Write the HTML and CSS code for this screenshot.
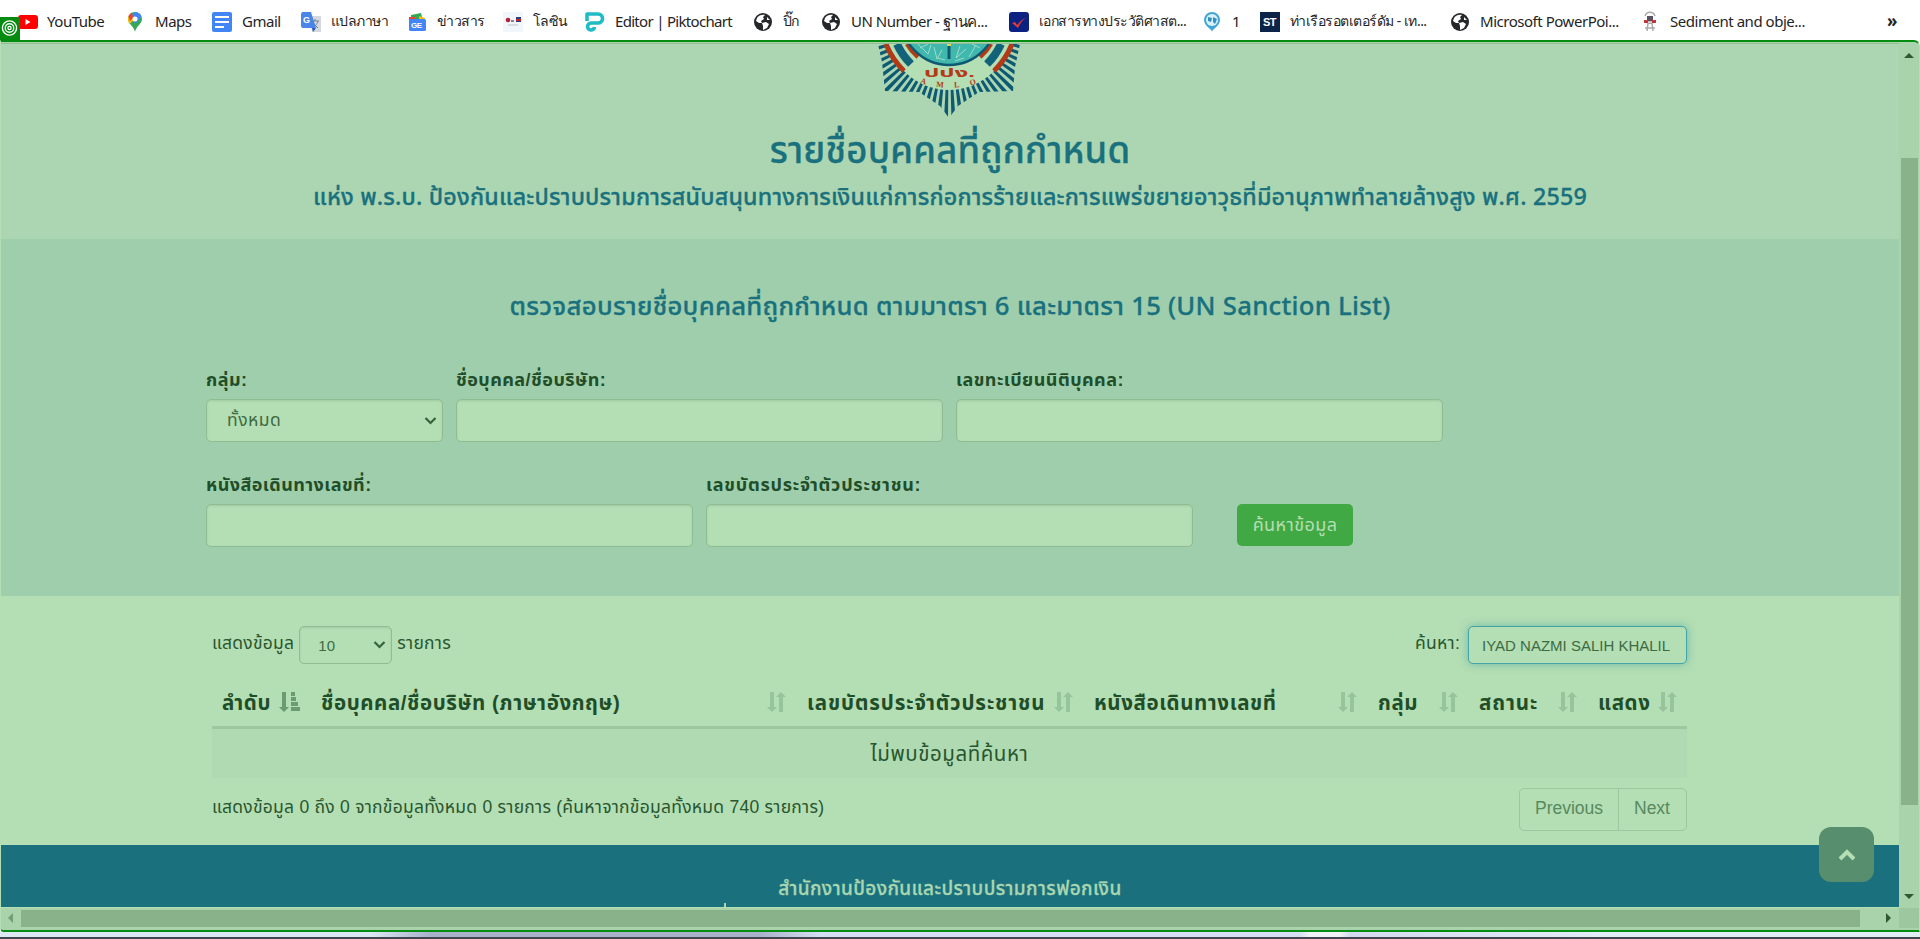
FILE: index.html
```html
<!DOCTYPE html>
<html lang="th">
<head>
<meta charset="utf-8">
<title>รายชื่อบุคคลที่ถูกกำหนด</title>
<link rel="stylesheet" href="styles.css">
</head>
<body>
<svg width="0" height="0" class="defs">
  <symbol id="globe" viewBox="0 0 20 20"><circle cx="10" cy="10" r="9" fill="#25272b"/><path d="M4 6c2-3 5-3.500 8-3l-2 2 1 2-3 2 1 2H6l-3-2zM9 11l4-1 3 2-2 4-4 2v-4zM14 5l3 3-3 0z" fill="#fff"/></symbol>
  <symbol id="sort" viewBox="0 0 19 20"><path d="M3 0h4v15h3l-5 5-5-5h3zM12 20h4V5h3l-5-5-5 5h3z"/></symbol>
  <symbol id="sorted" viewBox="0 0 21 20"><path d="M3 0h4v15h3l-5 5-5-5h3zM12 0h4v4h-4zM12 5h5v4h-5zM12 10h7v4h-7zM12 15h9v4h-9z"/></symbol>
  <symbol id="chev" viewBox="0 0 12 8"><path d="M1 1l5 5 5-5" fill="none" stroke="#35633a" stroke-width="2.200"/></symbol>
</svg>
<div class="screen">
  <nav class="bookmarks">
    <a class="bm"><svg viewBox="0 0 20 20"><rect x="1" y="3" width="20" height="14" rx="3" fill="#f00"/><path d="M8.500 7v6l5-3z" fill="#fff"/></svg><span>YouTube</span></a>
    <a class="bm"><svg viewBox="0 0 20 20"><path d="M10 0a7 7 0 0 0-7 7c0 5 6 7 7 13 1-6 7-8 7-13a7 7 0 0 0-7-7z" fill="#34a853"/><path d="M10 0a7 7 0 0 1 6.500 4.500L10 12 6 4z" fill="#4285f4"/><path d="M5 2l5 5-5.500 5A9 9 0 0 1 3 7a7 7 0 0 1 2-5z" fill="#fbbc04"/><path d="M5 2a7 7 0 0 1 2-1.500L8 6 5 9 3.500 4z" fill="#ea4335"/><circle cx="10" cy="7" r="2.500" fill="#fff"/></svg><span>Maps</span></a>
    <a class="bm"><svg viewBox="0 0 20 20"><rect width="20" height="20" rx="2" fill="#4285f4"/><path d="M3 5h14M3 10h14M3 15h9" stroke="#fff" stroke-width="2"/></svg><span>Gmail</span></a>
    <a class="bm thai"><svg viewBox="0 0 20 20"><path d="M8 4h12v16H11z" fill="#d5d8dc"/><path d="M11 9h7M14 7v2M17 9c-1 4-3 5-5 6M12 11l5 5" stroke="#6d8397" fill="none"/><path d="M1 0h9l5 16H2a2 2 0 0 1-2-2V2z" fill="#4a86e8"/><path d="M11 16h4l-3 4z" fill="#2458c4"/><text x="2" y="11" font-size="9" font-weight="700" fill="#fff">G</text></svg><span>แปลภาษา</span></a>
    <a class="bm thai"><svg viewBox="0 0 20 20"><path d="M4 3l10-2 2 8H4z" fill="#34a853"/><path d="M2 5h6v5H2z" fill="#ea4335"/><path d="M12 4l6 2-2 5h-4z" fill="#fbbc04"/><rect x="2" y="7" width="17" height="12" rx="1.500" fill="#4285f4"/><text x="4" y="16" font-size="8" font-weight="700" fill="#fff">GE</text></svg><span>ข่าวสาร</span></a>
    <a class="bm thai"><svg viewBox="0 0 20 20"><rect width="20" height="20" fill="#f1f6fb"/><circle cx="5" cy="8" r="2.300" fill="#b5203a"/><rect x="8" y="8" width="3" height="2" fill="#7d86a8"/><path d="M13 5h5v5h-5z" fill="#28418e"/><path d="M13 7h5v2h-5z" fill="#c22"/><path d="M5 13h10" stroke="#b9c2cf"/></svg><span>โลซิน</span></a>
    <a class="bm tight"><svg viewBox="0 0 20 20"><path d="M2 9V2h11a4.500 4.500 0 0 1 0 9H6a3.500 3.500 0 1 0 3.500 4" fill="none" stroke="#1fbcc6" stroke-width="3.600" stroke-linejoin="round"/></svg><span>Editor | Piktochart</span></a>
    <a class="bm thai"><svg><use href="#globe"/></svg><span>ปิ๊ก</span></a>
    <a class="bm"><svg><use href="#globe"/></svg><span>UN Number - ฐานค...</span></a>
    <a class="bm thai"><svg viewBox="0 0 20 20"><rect width="20" height="20" rx="3" fill="#0b2282"/><path d="M3 11l3-1 2 3c3-3 5-6 9-7-4 2-6 6-8 10z" fill="#e03c35"/></svg><span>เอกสารทางประวัติศาสต...</span></a>
    <a class="bm"><svg viewBox="0 0 20 20"><path d="M10 20c0-3-8-6-8-12a8 8 0 0 1 16 0c0 6-8 9-8 12z" fill="#42a5d3"/><circle cx="10" cy="8" r="6" fill="#d9f1fa"/><path d="M6 5l4 1-1 4-3-1zM11 5l4 2-2 5-2-2z" fill="#3290bf"/></svg><span>1</span></a>
    <a class="bm thai"><svg viewBox="0 0 20 20"><rect width="20" height="20" fill="#0d2449"/><text x="3" y="14" font-size="11" font-weight="700" fill="#fff">ST</text></svg><span>ท่าเรือรอตเตอร์ดัม - เท...</span></a>
    <a class="bm"><svg><use href="#globe"/></svg><span>Microsoft PowerPoi...</span></a>
    <a class="bm"><svg viewBox="0 0 20 20"><path d="M5 4c2-5 8-5 10 0M4 9l12 0M6 9c0 3 8 3 8 0M8 11l-1 8M12 11l1 8M5 16h10" stroke="#aaa" fill="none" stroke-width="1.500"/><rect x="7" y="4" width="6" height="5" fill="#5a5060"/><path d="M4 8h4v3H4zM12 8h4v3h-4z" fill="#c8343c"/></svg><span>Sediment and obje...</span></a>
    <span class="more">»</span>
  </nav>
  <div class="window">
    <div class="page">
      <header class="hero">
        <svg class="emblem" viewBox="136 4 148 75">
          <clipPath id="star"><path d="M138 4l4 18 3 29 34 1 21 14 9 12 9-12 21-14 34-1 2-24 5-23z"/></clipPath>
          <g clip-path="url(#star)"><circle cx="209" cy="-13" r="83" fill="none" stroke="#0e5a72" stroke-width="60" stroke-dasharray="3.700 3.200"/></g>
          <circle cx="209" cy="-13" r="63" fill="#b4deb4"/>
          <path d="M146 4q6 15 18 27M272 4q-6 15-18 27" stroke="#b23a17" stroke-width="5" fill="none"/>
          <path d="M157 4q5 11 14 20M261 4q-5 11-14 20" stroke="#12637a" stroke-width="8" fill="none"/>
          <path d="M167 4q4 7 11 13M251 4q-4 7-11 13" stroke="#b23a17" stroke-width="4.500" fill="none"/>
          <circle cx="209" cy="-23" r="48" fill="#40b8ad" stroke="#0e5a72" stroke-width="2.500"/>
          <path d="M180 8l8-4M178 4l10 10 3-9M194 7l3 12 5-9M220 6l-4 12 10-9M236 5l-7 12M240 8l-8-4M205 20l-8-2M215 21l9-3" stroke="#9cdccb" fill="none"/>
          <path d="M209 4v15" stroke="#0e5a72" stroke-width="3"/><path d="M207 4h4v2h-4z" fill="#e0d94a"/>
          <text x="184" y="36.500" class="em-th" textLength="51" lengthAdjust="spacingAndGlyphs">ปปง.</text>
          <path id="arc" d="M180 43q29 9 60 0" fill="none"/>
          <text class="em-en"><textPath href="#arc" textLength="57">AMLO</textPath></text>
        </svg>
        <h1>รายชื่อบุคคลที่ถูกกำหนด</h1>
        <h2>แห่ง พ.ร.บ. ป้องกันและปราบปรามการสนับสนุนทางการเงินแก่การก่อการร้ายและการแพร่ขยายอาวุธที่มีอานุภาพทำลายล้างสูง พ.ศ. 2559</h2>
      </header>
      <section class="search">
        <h3>ตรวจสอบรายชื่อบุคคลที่ถูกกำหนด ตามมาตรา 6 และมาตรา 15 (UN Sanction List)</h3>
        <div class="row">
          <label class="field small"><b>กลุ่ม:</b><i class="box select"><span>ทั้งหมด</span><svg class="chev"><use href="#chev"/></svg></i></label>
          <label class="field"><b>ชื่อบุคคล/ชื่อบริษัท:</b><i class="box"></i></label>
          <label class="field"><b>เลขทะเบียนนิติบุคคล:</b><i class="box"></i></label>
        </div>
        <div class="row">
          <label class="field"><b>หนังสือเดินทางเลขที่:</b><i class="box"></i></label>
          <label class="field"><b class="wide">เลขบัตรประจำตัวประชาชน:</b><i class="box"></i></label>
          <button class="go">ค้นหาข้อมูล</button>
        </div>
      </section>
      <section class="results">
        <div class="tools">
          <div class="len"><span>แสดงข้อมูล</span><i class="box select mini"><span>10</span><svg class="chev"><use href="#chev"/></svg></i><span>รายการ</span></div>
          <div class="find"><span>ค้นหา:</span><i class="box focus"><span>IYAD NAZMI SALIH KHALIL</span></i></div>
        </div>
        <div class="thead">
          <div class="th"><span>ลำดับ</span><svg class="on"><use href="#sorted"/></svg></div>
          <div class="th"><span>ชื่อบุคคล/ชื่อบริษัท (ภาษาอังกฤษ)</span><svg><use href="#sort"/></svg></div>
          <div class="th wide"><span>เลขบัตรประจำตัวประชาชน</span><svg><use href="#sort"/></svg></div>
          <div class="th"><span>หนังสือเดินทางเลขที่</span><svg><use href="#sort"/></svg></div>
          <div class="th"><span>กลุ่ม</span><svg><use href="#sort"/></svg></div>
          <div class="th wide"><span>สถานะ</span><svg><use href="#sort"/></svg></div>
          <div class="th"><span>แสดง</span><svg><use href="#sort"/></svg></div>
        </div>
        <div class="empty">ไม่พบข้อมูลที่ค้นหา</div>
        <div class="foot">
          <div class="info">แสดงข้อมูล 0 ถึง 0 จากข้อมูลทั้งหมด 0 รายการ (ค้นหาจากข้อมูลทั้งหมด 740 รายการ)</div>
          <div class="pager"><a>Previous</a><a>Next</a></div>
        </div>
      </section>
      <footer class="org">สำนักงานป้องกันและปราบปรามการฟอกเงิน<i class="next-line"></i></footer>
      <a class="top"><svg viewBox="0 0 18 12"><path d="M2 10l7-7 7 7" fill="none" stroke="#b4deb4" stroke-width="4"/></svg></a>
    </div>
    <div class="vbar"><svg viewBox="0 0 10 5"><path d="M5 0l5 5H0z"/></svg><i></i><svg viewBox="0 0 10 5"><path d="M0 0h10L5 5z"/></svg></div>
    <div class="hbar"><svg class="dim" viewBox="0 0 5 10"><path d="M5 0v10L0 5z"/></svg><i></i><svg viewBox="0 0 5 10"><path d="M0 0l5 5-5 5z"/></svg></div>
    <div class="corner"></div>
  </div>
  <div class="desk"></div>
  <div class="badge"><svg viewBox="0 0 18 18"><g fill="none" stroke="#fff" stroke-width="1.400"><circle cx="9" cy="9" r="7.500"/><circle cx="9" cy="9" r="4.500"/><circle cx="9" cy="9" r="1.700"/></g></svg></div>
</div>
</body>
</html>
```
FILE: styles.css
```css
* { box-sizing: border-box; }
html, body { margin: 0; height: 939px; overflow: hidden; }
body { font-family: "Liberation Sans", "Noto Sans Thai", "Noto Sans", sans-serif; color: #28562f; background: #fff; }
i { font-style: normal; }
span, h1, h2, h3, b, .info { white-space: nowrap; }
.defs { position: absolute; }
.screen { position: relative; width: 1920px; height: 939px; display: flex; flex-direction: column; overflow: hidden; }

.bookmarks { height: 40px; flex: none; padding: 1px 0 0 17px; display: grid; align-items: center;
  grid-template-columns: 108px 87px 89px 106px 96px 82px 168px 68px 188px 193px 58px 190px 190px 247px auto;
  font: 15px/20px "Noto Sans", sans-serif; color: #242424; letter-spacing: -0.47px; }
.bm { display: flex; align-items: center; gap: 10px; min-width: 0; }
.bm svg { width: 20px; height: 20px; flex: none; overflow: visible; position: relative; top: 1px; }
.bm text { font-family: "Liberation Sans", sans-serif; }
.thai { font-size: 14px; letter-spacing: -0.52px; }
.tight { letter-spacing: -0.69px; }
.more { font-weight: 700; font-size: 17px; }

.window { flex: none; height: 892px; border: 2px solid #048c10; border-width: 2px 1px 2px; border-radius: 0 6px 0 4px;
  background: #a9d3ab; display: grid; grid-template-columns: 1898px 20px; grid-template-rows: 865px 20px; padding-top: 1px; border-left-color: #b4deb4; border-right-color: #b4deb4; }
.page { position: relative; border-top: 1px solid #93bd96; background: #b4deb4; overflow: hidden; display: flex; flex-direction: column; }

.hero { height: 195px; flex: none; background: #acd6b1; text-align: center; color: #1a717e; }
.emblem { display: block; width: 148px; height: 75px; margin: 0 auto; }
.em-th { font: 700 12px "Liberation Sans", "Noto Sans Thai", sans-serif; fill: #b23a17; }
.em-en { font: 700 8px "Liberation Serif", serif; fill: #b23a17; }
h1, h2, h3 { margin: 0; font-weight: 500; font-family: "Noto Sans", "Noto Sans Thai", sans-serif; -webkit-text-stroke: 0.3px; }
h1 { font-size: 36.5px; line-height: 60px; letter-spacing: 0.2px; }
h2 { font-size: 23.3px; line-height: 34px; letter-spacing: 0.18px; }

.search { height: 357px; flex: none; background: #9fceac; padding: 50px 0 0 205px; }
.search h3 { margin-left: -205px; text-align: center; color: #1a717e; font-size: 25.7px; line-height: 34px; height: 45px; letter-spacing: 0.28px; }
.row { display: flex; gap: 13px; height: 105px; padding-top: 35px; }
.field { width: 487px; }
.field.small { width: 237px; }
.field b { display: block; font-size: 18px; line-height: 23px; height: 30px; color: #1f4e28; letter-spacing: 0.45px; }
.field b.wide { letter-spacing: 0.75px; }
.box { display: flex; align-items: center; height: 43px; border: 1px solid #8fbc92; border-radius: 5px; background: #b4deb4; box-shadow: inset 0 1px 2px rgba(60,110,70,.15); color: #3d6b43; font-size: 17.5px; }
.select { justify-content: space-between; padding: 0 5px 0 20px; letter-spacing: 0.5px; }
.chev { width: 13px; height: 8px; }
.go { margin: 30px 0 0 31px; width: 116px; height: 42px; border: 0; border-radius: 5px; background: #40a944; color: #b4deb4; font: 18px "Liberation Sans", "Noto Sans Thai", sans-serif; letter-spacing: 0.4px; padding: 0; white-space: nowrap; }

.results { height: 249px; flex: none; padding: 30px 212px 0 211px; }
.tools { display: flex; justify-content: space-between; height: 50px; }
.len, .find { display: flex; gap: 5px; font-size: 17.5px; line-height: 35px; letter-spacing: 0.25px; }
.mini { width: 93px; height: 38px; padding-left: 18px; font-size: 15px; letter-spacing: 0; }
.find { gap: 8px; }
.focus { width: 219px; height: 38px; padding-left: 13px; border-color: #43a3a6; box-shadow: 0 0 8px rgba(60,160,160,.6); font-size: 15px; letter-spacing: 0; }
.thead { display: grid; grid-template-columns: 99px 486px 287px 284px 101px 119px 100px; height: 53px; border-bottom: 3px solid #9cc79f; }
.th { display: flex; justify-content: space-between; align-items: flex-start; padding: 12px 11px 0 10px; font-weight: 700; font-size: 20.5px; line-height: 30px; color: #1f4e28; letter-spacing: 0.6px; min-width: 0; }
.th.wide { letter-spacing: 0.9px; }
.th svg { width: 19px; height: 20px; margin-top: 4px; fill: #98c49b; flex: none; }
.th .on { width: 21px; fill: #6b9b70; }
.empty { height: 49px; background: #b0dab1; text-align: center; font-size: 20.5px; line-height: 50px; letter-spacing: 0.55px; }
.foot { display: flex; justify-content: space-between; padding-top: 10px; }
.info { font-size: 17.5px; line-height: 39px; letter-spacing: 0.25px; }
.pager { display: flex; height: 43px; border: 1px solid #9cc79f; border-radius: 5px; color: #578a5e; font-size: 17.5px; line-height: 39px; }
.pager a { padding: 0 15px; width: 98px; }
.pager a + a { border-left: 1px solid #9cc79f; width: 68px; }

.org { flex: none; height: 62px; position: relative; background: #1a717d; color: #a9d6b0; text-align: center; font: 500 19px/86px "Noto Sans", "Noto Sans Thai", sans-serif; letter-spacing: 0.4px; -webkit-text-stroke: 0.3px; overflow: hidden; }
.next-line { position: absolute; left: 723px; bottom: 0; width: 2px; height: 4px; background: #a9d6b0; }
.top { position: absolute; left: 1818px; top: 783px; width: 55px; height: 55px; border-radius: 12px; background: #568e6e; display: flex; align-items: center; justify-content: center; }
.top svg { width: 18px; height: 12px; }

.vbar { display: flex; flex-direction: column; align-items: center; padding: 10px 0 9px; }
.vbar svg { width: 10px; height: 5px; fill: #2c5a34; flex: none; }
.vbar i { width: 17px; height: 647px; margin: 100px 0 auto; background: #89b18a; }
.hbar { display: flex; align-items: center; padding: 0 8px 0 7px; justify-content: space-between; }
.hbar svg { width: 5px; height: 10px; fill: #2c5a34; }
.hbar .dim { fill: #739f76; }
.hbar i { width: 1839px; height: 17px; background: #89b18a; margin: 0 auto 0 8px; }
.corner { background: #9cc79f; }
.desk { height: 7px; flex: none; border-bottom: 2px solid #44464f; background: linear-gradient(90deg, #dce8f4 0 370px, #a9b2cb 430px 760px, #d5def2 820px 1300px, #f0f2f8 1310px 1340px, #d5daf0 1350px, #e2edf8 1600px); }
.badge { position: absolute; left: 0; top: 17px; width: 20px; height: 23px; background: #048c10; padding: 2px 1px; }
.badge svg { display: block; width: 17px; height: 18px; }
```
